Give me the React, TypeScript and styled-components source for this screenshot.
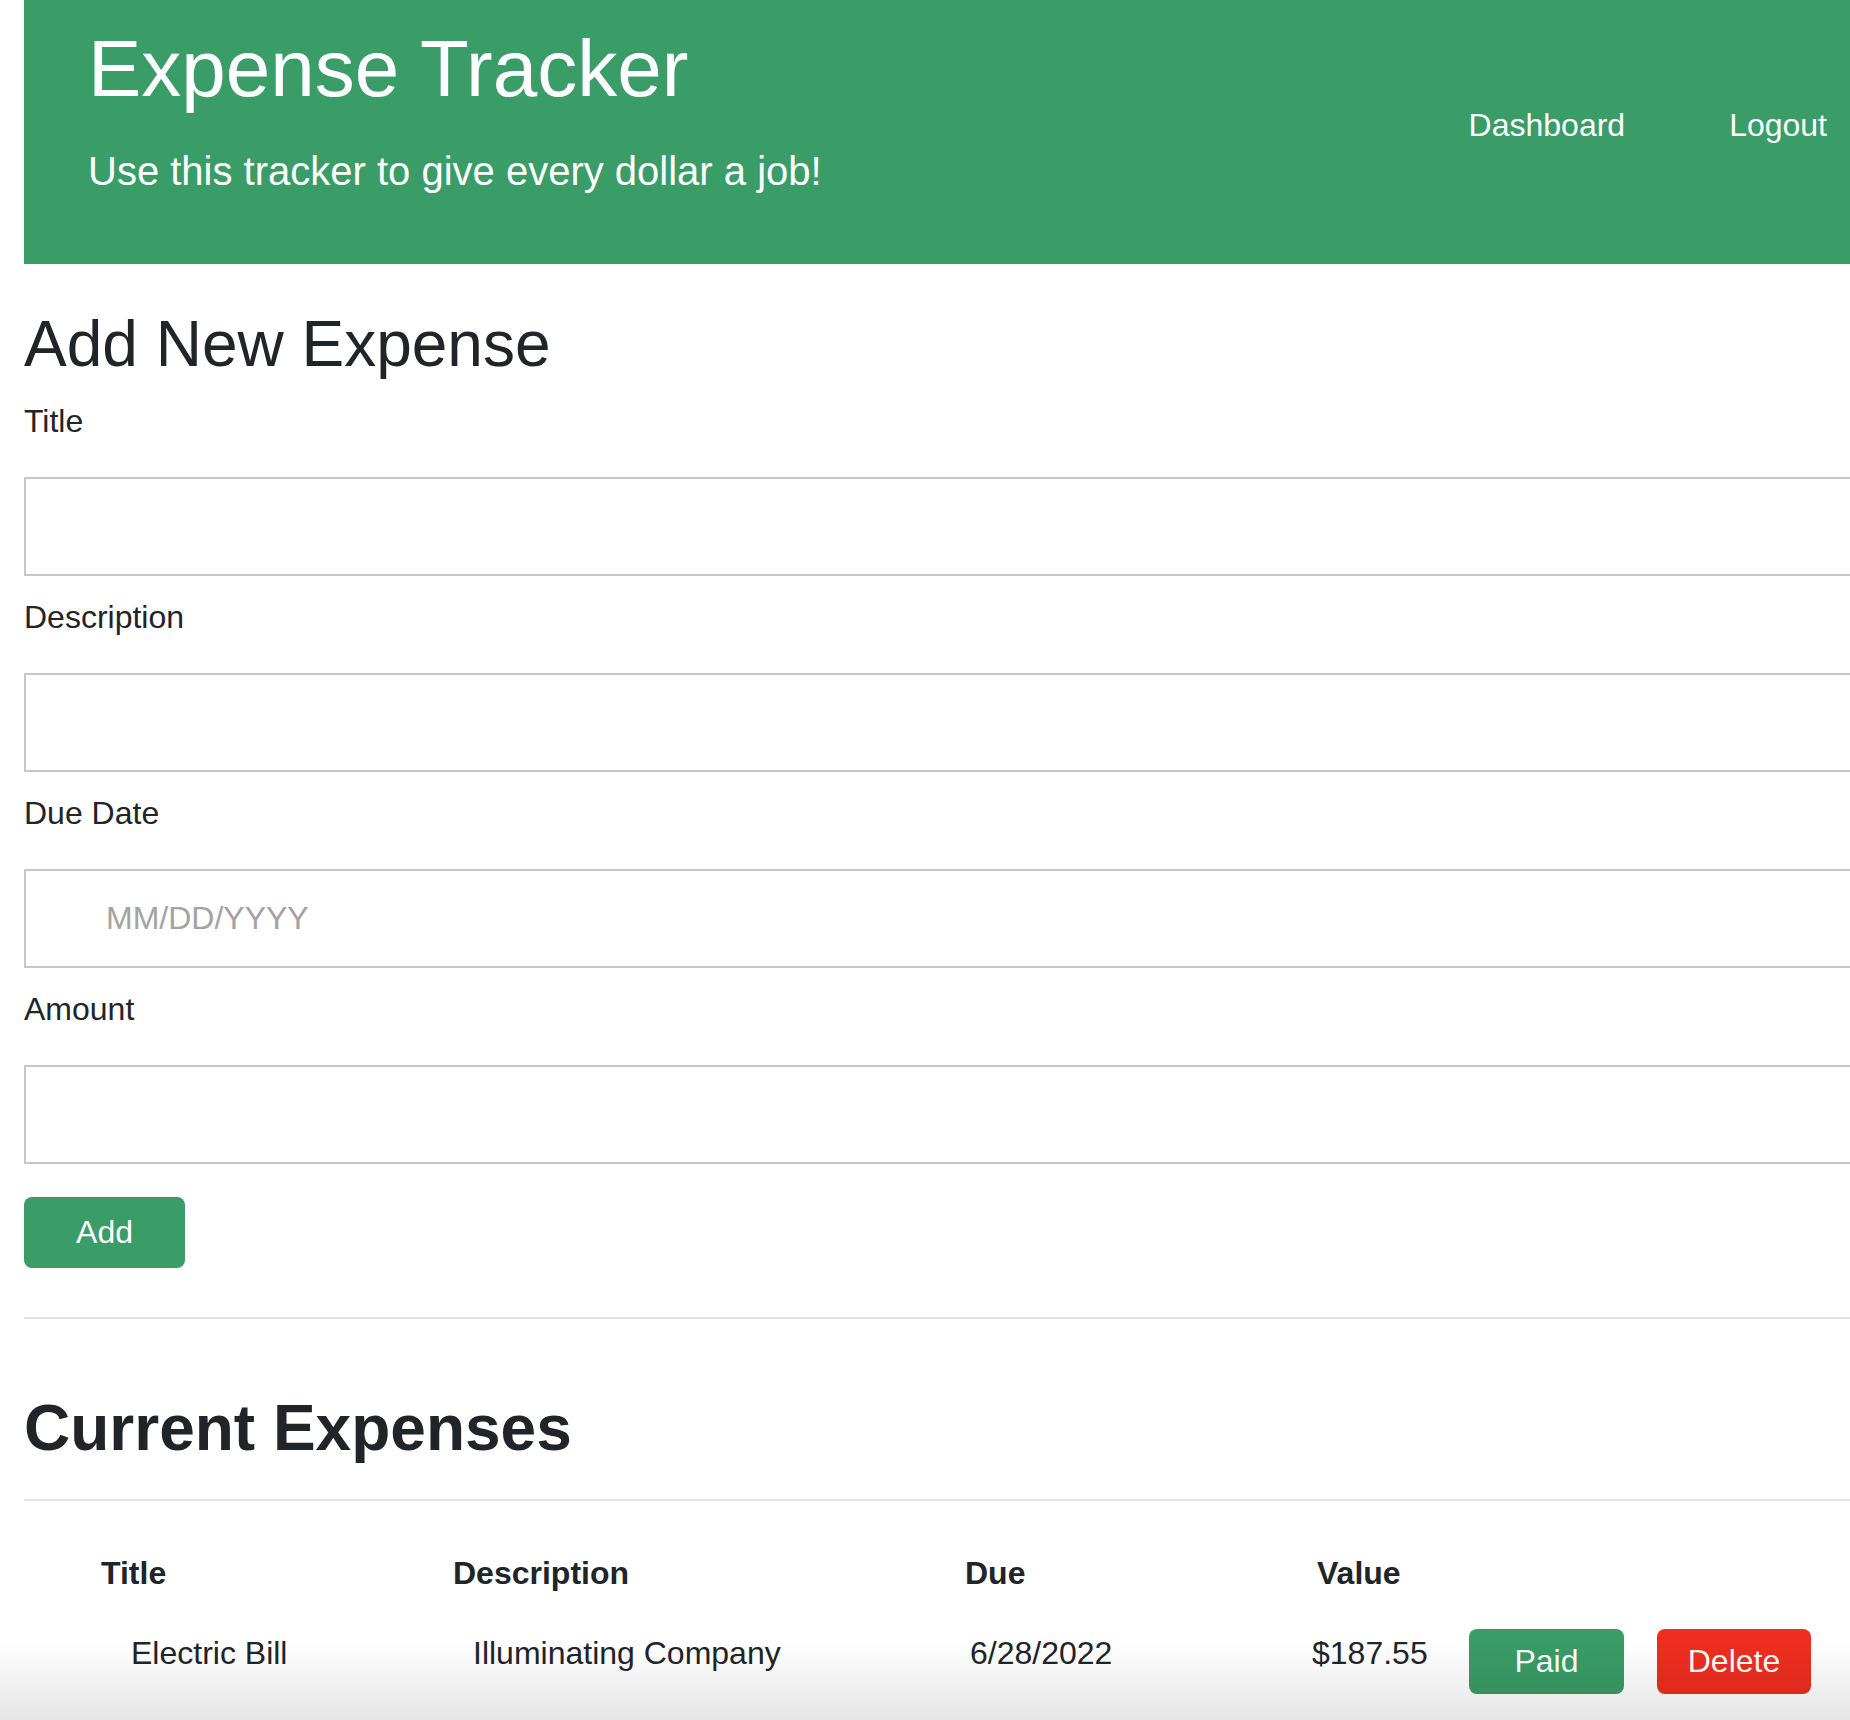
import React from "react";
import styled, { createGlobalStyle } from "styled-components";

const GlobalStyle = createGlobalStyle`
    html, body {
        margin: 0;
        padding: 0;
        overflow: hidden;
        background: #fff;
    }
    body {
        font-family: "Liberation Sans", Arial, Helvetica, sans-serif;
        color: #212529;
    }
    * {
        box-sizing: border-box;
    }
`;

const expenses = [
    { title: "Electric Bill", description: "Illuminating Company", due: "6/28/2022", value: "$187.55" },
];

const App = () => {
    return (
        <Page>
            <GlobalStyle />
            <Header>
                <Brand>
                    <BrandTitle>Expense Tracker</BrandTitle>
                    <Tagline>Use this tracker to give every dollar a job!</Tagline>
                </Brand>
                <Nav>
                    <NavLink href="#">Dashboard</NavLink>
                    <NavLink href="#">Logout</NavLink>
                </Nav>
            </Header>

            <Main>
                <FormTitle>Add New Expense</FormTitle>
                <form onSubmit={(e) => e.preventDefault()}>
                    <Field>
                        <Label htmlFor="title">Title</Label>
                        <TextInput id="title" type="text" />
                    </Field>
                    <Field>
                        <Label htmlFor="description">Description</Label>
                        <TextInput id="description" type="text" />
                    </Field>
                    <Field>
                        <Label htmlFor="due">Due Date</Label>
                        <TextInput id="due" type="text" placeholder="MM/DD/YYYY" $indent={80} />
                    </Field>
                    <Field>
                        <Label htmlFor="amount">Amount</Label>
                        <TextInput id="amount" type="text" />
                    </Field>
                    <Button type="submit" $variant="green" $w={161} $h={71}>
                        Add
                    </Button>
                </form>

                <Rule $top={49} />
                <ListTitle>Current Expenses</ListTitle>
                <Rule $top={32} />

                <Table>
                    <Row $indent={77} $cols="352px 512px 352px 1fr">
                        <HeadCell>Title</HeadCell>
                        <HeadCell>Description</HeadCell>
                        <HeadCell>Due</HeadCell>
                        <HeadCell>Value</HeadCell>
                    </Row>
                    {expenses.map((item) => (
                        <Row key={item.title} $indent={107} $cols="342px 497px 342px 157px 188px 1fr">
                            <Cell>{item.title}</Cell>
                            <Cell>{item.description}</Cell>
                            <Cell>{item.due}</Cell>
                            <Cell>{item.value}</Cell>
                            <Button $variant="green" $w={155} $h={65}>
                                Paid
                            </Button>
                            <Button $variant="red" $w={154} $h={65}>
                                Delete
                            </Button>
                        </Row>
                    ))}
                </Table>
            </Main>
            <BottomShade />
        </Page>
    );
};

const Page = styled.div`
    padding-left: 24px;
    min-height: 1720px;
`;

const Header = styled.header`
    display: flex;
    justify-content: space-between;
    align-items: flex-start;
    height: 264px;
    padding: 21px 23px 0 64px;
    background: #3a9c67;
    color: #fff;
`;

const Brand = styled.div`
    display: flex;
    flex-direction: column;
`;

const BrandTitle = styled.h1`
    margin: 0;
    font-size: 80px;
    line-height: 96px;
    font-weight: 400;
`;

const Tagline = styled.p`
    margin: 24px 0 0;
    font-size: 40px;
    line-height: 60px;
`;

const Nav = styled.nav`
    display: flex;
    gap: 104px;
    margin-top: 80px;
`;

const NavLink = styled.a`
    color: #fff;
    text-decoration: none;
    font-size: 32px;
    line-height: 48px;
`;

const Main = styled.main`
    width: calc(100% + 40px);
`;

const FormTitle = styled.h2`
    margin: 42px 0 14px;
    font-size: 64px;
    line-height: 77px;
    font-weight: 400;
`;

const Field = styled.div`
    display: flex;
    flex-direction: column;
    gap: 32px;
    margin-bottom: 17px;

    &:last-of-type {
        margin-bottom: 33px;
    }
`;

const Label = styled.label`
    font-size: 32px;
    line-height: 48px;
`;

const TextInput = styled.input<{ $indent?: number }>`
    display: block;
    width: 100%;
    height: 99px;
    padding: 0 0 0 ${(p) => p.$indent ?? 24}px;
    border: 2px solid #c6c6c6;
    border-radius: 0;
    font-family: inherit;
    font-size: 32px;
    color: #212529;
    outline: none;

    &::placeholder {
        color: #a3a3a3;
    }
`;

const Button = styled.button<{ $variant: "green" | "red"; $w: number; $h: number }>`
    display: flex;
    align-items: center;
    justify-content: center;
    width: ${(p) => p.$w}px;
    height: ${(p) => p.$h}px;
    padding: 0;
    border: none;
    border-radius: 8px;
    background: ${(p) => (p.$variant === "red" ? "#ee2e20" : "#3a9c67")};
    color: #fff;
    font-family: inherit;
    font-size: 32px;
    cursor: pointer;
`;

const Rule = styled.hr<{ $top: number }>`
    margin: ${(p) => p.$top}px 0 0;
    border: none;
    border-top: 2px solid #e3e3e3;
`;

const ListTitle = styled.h2`
    margin: 71px 0 0;
    font-size: 64px;
    line-height: 77px;
    font-weight: 700;
`;

const Table = styled.div`
    display: flex;
    flex-direction: column;
    gap: 32px;
    margin-top: 48px;
`;

const Row = styled.div<{ $indent: number; $cols: string }>`
    display: grid;
    grid-template-columns: ${(p) => p.$cols};
    align-items: start;
    padding-left: ${(p) => p.$indent}px;
`;

const HeadCell = styled.div`
    font-size: 32px;
    line-height: 48px;
    font-weight: 700;
`;

const Cell = styled.div`
    font-size: 32px;
    line-height: 48px;
`;

const BottomShade = styled.div`
    position: fixed;
    left: 0;
    right: 0;
    bottom: 0;
    height: 78px;
    pointer-events: none;
    background: linear-gradient(to bottom, rgba(0, 0, 0, 0), rgba(0, 0, 0, 0.1));
`;

export default App;
